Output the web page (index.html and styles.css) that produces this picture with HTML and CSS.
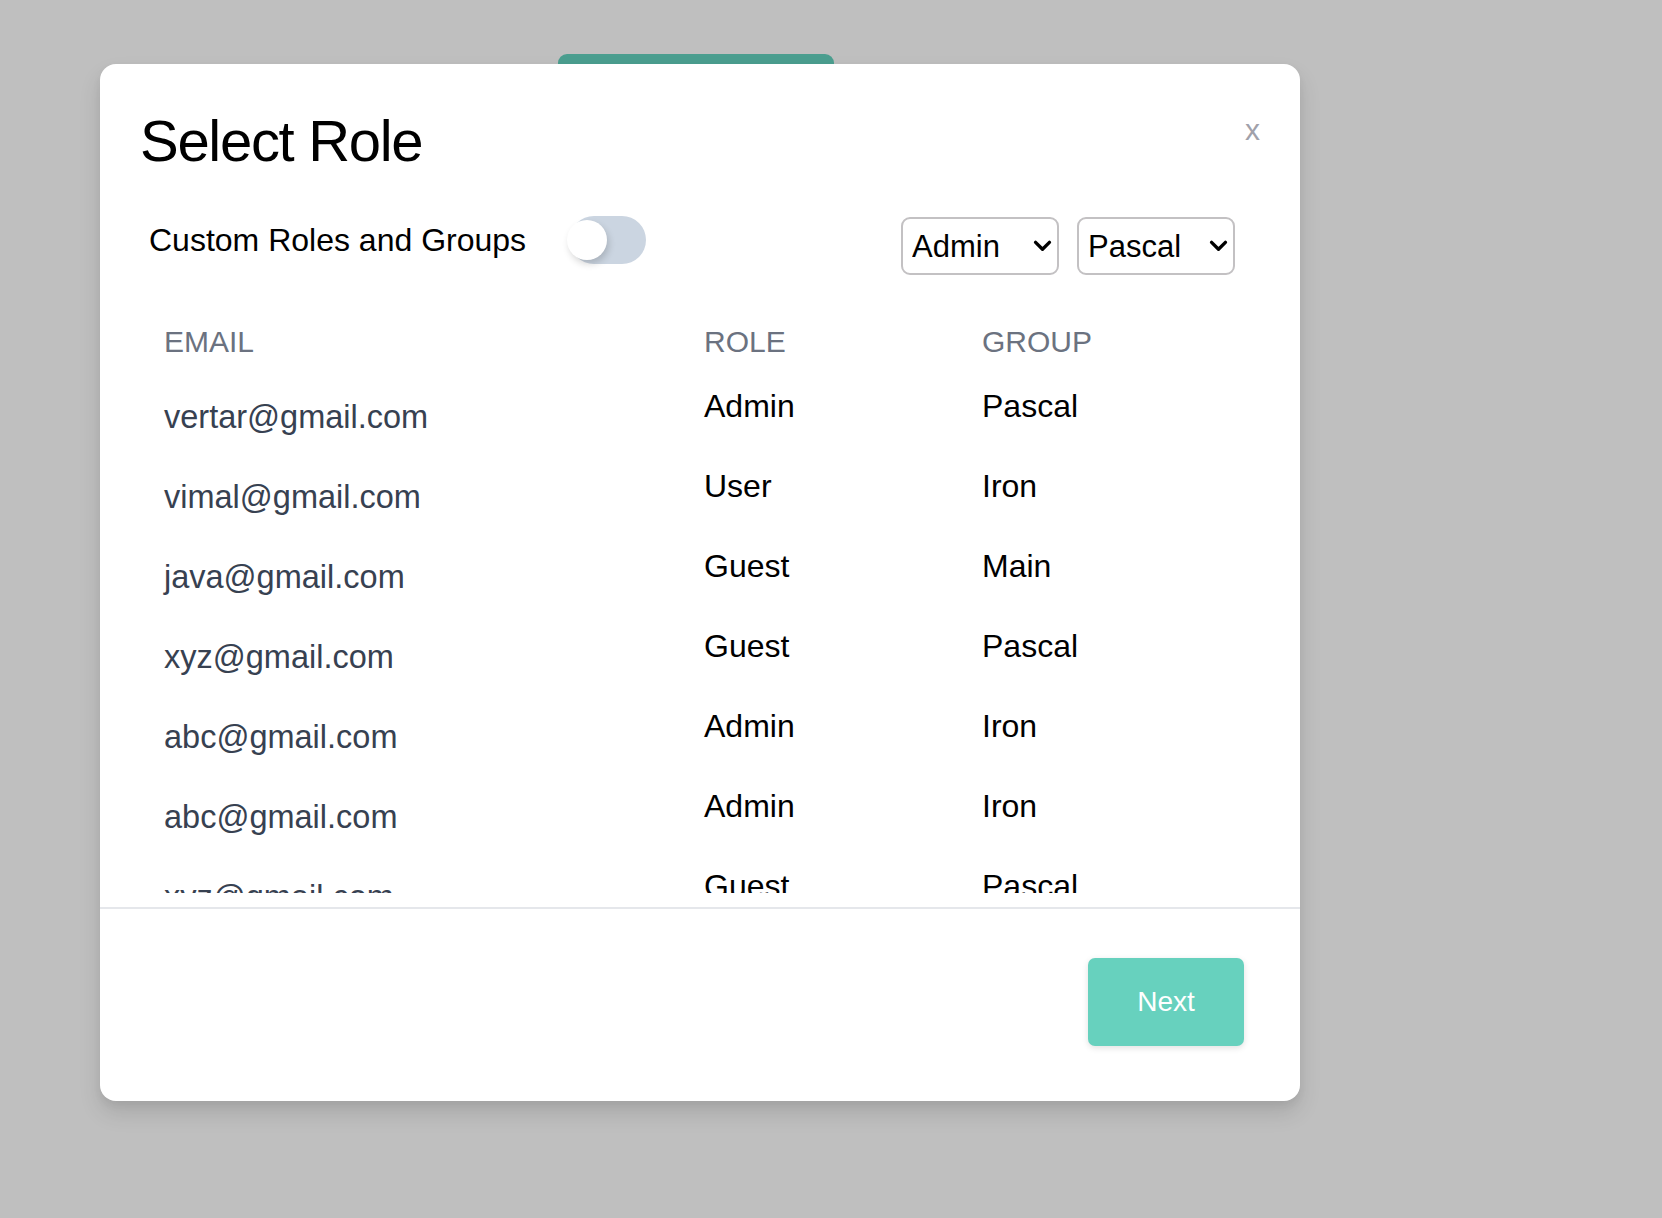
FILE: index.html
```html
<!DOCTYPE html>
<html lang="en">
<head>
<meta charset="utf-8">
<title>Select Role</title>
<link rel="stylesheet" href="styles.css">
</head>
<body>
<div class="page">
  <button class="bg-tab" aria-hidden="true"></button>
  <div class="modal" role="dialog">
    <div class="modal-body">
      <div class="title-row">
        <h1 class="title">Select Role</h1>
        <button class="close">x</button>
      </div>
      <div class="controls">
        <div class="toggle-group">
          <span class="toggle-label">Custom Roles and Groups</span>
          <span class="toggle"><span class="knob"></span></span>
        </div>
        <div class="selects">
          <div class="select-wrap">
            <select class="select"><option>Admin</option><option>User</option><option>Guest</option></select>
            <svg class="chev" viewBox="0 0 20 13" width="19" height="12"><path d="M2.5 2.5 L10 10 L17.5 2.5" fill="none" stroke="#000" stroke-width="3.6" stroke-linecap="round" stroke-linejoin="round"/></svg>
          </div>
          <div class="select-wrap">
            <select class="select"><option>Pascal</option><option>Iron</option><option>Main</option></select>
            <svg class="chev" viewBox="0 0 20 13" width="19" height="12"><path d="M2.5 2.5 L10 10 L17.5 2.5" fill="none" stroke="#000" stroke-width="3.6" stroke-linecap="round" stroke-linejoin="round"/></svg>
          </div>
        </div>
      </div>
      <div class="table-wrap">
        <div class="row head">
          <span>EMAIL</span><span>ROLE</span><span>GROUP</span>
        </div>
        <div class="row"><span class="email">vertar@gmail.com</span><span class="cell">Admin</span><span class="cell">Pascal</span></div>
        <div class="row"><span class="email">vimal@gmail.com</span><span class="cell">User</span><span class="cell">Iron</span></div>
        <div class="row"><span class="email">java@gmail.com</span><span class="cell">Guest</span><span class="cell">Main</span></div>
        <div class="row"><span class="email">xyz@gmail.com</span><span class="cell">Guest</span><span class="cell">Pascal</span></div>
        <div class="row"><span class="email">abc@gmail.com</span><span class="cell">Admin</span><span class="cell">Iron</span></div>
        <div class="row"><span class="email">abc@gmail.com</span><span class="cell">Admin</span><span class="cell">Iron</span></div>
        <div class="row"><span class="email">xyz@gmail.com</span><span class="cell">Guest</span><span class="cell">Pascal</span></div>
      </div>
    </div>
    <div class="modal-footer">
      <button class="next">Next</button>
    </div>
  </div>
</div>
</body>
</html>
```
FILE: styles.css
```css
html, body {
  margin: 0;
  padding: 0;
}
body {
  background: #bfbfbf;
  font-family: "Liberation Sans", Arial, sans-serif;
  color: #000;
}
.page {
  position: relative;
  width: 1662px;
  height: 1218px;
  overflow: hidden;
}
.bg-tab {
  position: absolute;
  left: 558px;
  top: 54px;
  width: 276px;
  height: 60px;
  border: 0;
  padding: 0;
  border-radius: 9px;
  background: #4b9e8f;
}
.modal {
  position: absolute;
  left: 100px;
  top: 64px;
  width: 1200px;
  background: #fff;
  border-radius: 16px;
  box-shadow: 0 12px 22px rgba(0, 0, 0, 0.12), 0 4px 8px rgba(0, 0, 0, 0.05);
  overflow: hidden;
}
.modal-body {
  padding: 43px 40px 14px 40px;
}
.title-row {
  display: flex;
  justify-content: space-between;
  align-items: flex-start;
}
.title {
  margin: 0;
  font-size: 58px;
  line-height: 68px;
  font-weight: 400;
  letter-spacing: -1.3px;
  color: #000;
}
.close {
  margin-top: 5px;
  padding: 0;
  border: 0;
  background: none;
  font-family: "Liberation Sans", Arial, sans-serif;
  font-size: 30px;
  line-height: 36px;
  color: #a1a1aa;
}
.controls {
  margin-top: 41px;
  display: flex;
  justify-content: space-between;
  align-items: flex-start;
}
.toggle-group {
  display: flex;
  align-items: center;
  height: 48px;
  padding-left: 9px;
  gap: 44px;
}
.toggle-label {
  font-size: 32px;
  line-height: 36px;
  color: #000;
}
.toggle {
  position: relative;
  display: block;
  width: 76px;
  height: 48px;
  border-radius: 24px;
  background: #cbd5e1;
}
.knob {
  position: absolute;
  left: -3px;
  top: 4px;
  width: 40px;
  height: 40px;
  border-radius: 50%;
  background: #fff;
  box-shadow: 2px 4px 7px rgba(0, 0, 0, 0.16);
}
.selects {
  display: flex;
  gap: 18px;
  margin-top: 1px;
  margin-right: 25px;
}
.select-wrap {
  position: relative;
  width: 158px;
  height: 58px;
}
.select {
  -webkit-appearance: none;
  appearance: none;
  box-sizing: border-box;
  width: 158px;
  height: 58px;
  margin: 0;
  padding: 0 0 0 9px;
  border: 2px solid #c3c1c3;
  border-radius: 9px;
  background: #fff;
  font-family: "Liberation Sans", Arial, sans-serif;
  font-size: 31px;
  color: #000;
}
.chev {
  position: absolute;
  right: 7px;
  top: 23px;
  pointer-events: none;
}
.table-wrap {
  box-sizing: border-box;
  margin-top: 15px;
  height: 603px;
  padding: 34px 0 0 24px;
  overflow: hidden;
}
.row {
  display: grid;
  grid-template-columns: 540px 278px 1fr;
  align-items: start;
  height: 80px;
}
.row.head {
  height: 64px;
}
.head span {
  font-size: 30px;
  line-height: 36px;
  color: #6b7280;
}
.email {
  padding-top: 11px;
  font-size: 32.5px;
  line-height: 36px;
  color: #374151;
}
.cell {
  font-size: 32px;
  line-height: 36px;
  color: #000;
}
.modal-footer {
  display: flex;
  justify-content: flex-end;
  border-top: 2px solid #e5e7eb;
  padding: 49px 56px 55px 40px;
}
.next {
  width: 156px;
  height: 88px;
  border: 0;
  border-radius: 7px;
  background: #67d1be;
  color: #fff;
  font-family: "Liberation Sans", Arial, sans-serif;
  font-size: 28px;
  box-shadow: 0 2px 6px rgba(0, 0, 0, 0.12);
}
```
